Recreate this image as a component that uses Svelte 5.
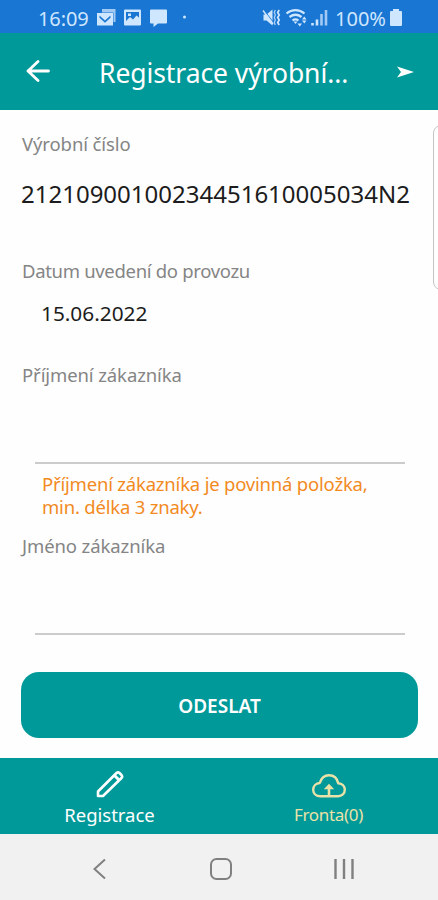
<script lang="ts">
	let serialNumber = '21210900100234451610005034N2';
	let commissioningDate = '15.06.2022';
	let surname = '';
	let firstName = '';
	let queueCount = 0;
</script>

<div class="screen">
	<div class="status-bar">
		<span class="clock">16:09</span>
		<svg class="notifications" width="92" height="24" viewBox="0 0 92 24" fill="currentColor">
			<path d="M5 4h13.500v13h-2V7.500H5z" opacity="0.75" />
			<path fill-rule="evenodd" d="M0 8h16v12.500H0zM2.500 10.500L8 15.500l5.500-5v2.200L8 17.700l-5.500-5z" />
			<path fill-rule="evenodd" d="M28 4.500h15a1 1 0 0 1 1 1v14a1 1 0 0 1-1 1H28a1 1 0 0 1-1-1v-14a1 1 0 0 1 1-1zM29 7v9l4-4 3 2.500 3.500-4 2.500 2V7zM31 8.500h3V11h-3z" />
			<path d="M54 4.500h15a1 1 0 0 1 1 1v12a1 1 0 0 1-1 1H61L56.500 22v-3.500H54a1 1 0 0 1-1-1v-12a1 1 0 0 1 1-1z" />
			<circle cx="87.500" cy="12" r="1.500" />
		</svg>
		<svg class="signals" width="66" height="24" viewBox="0 0 66 24" fill="none" stroke="currentColor">
			<path d="M1.500 9.500h3l6-5v16l-6-5h-3z" fill="currentColor" stroke="none" />
			<path d="M1.500 4.500l10 13" stroke="#1976d3" stroke-width="1" />
			<path d="M1 5.500l10 13.500" stroke-width="1.400" />
			<path d="M13.300 5l-1 2.500 1 2.500-1 2.500 1 2.500-1 2.500 1 2.500" stroke-width="1.300" opacity="0.8" />
			<path d="M17.200 5l-1.500 2.500 1.500 2.500-1.500 2.500 1.500 2.500-1.500 2.500 1.500 2.500" stroke-width="1.700" />
			<path d="M24.500 8.500c5.500-4.500 12.500-4.500 18 0M27.500 12c4-3 8-3 12 0M30.500 15.500c2-1.600 4-1.600 6 0" stroke-width="2.200" />
			<path d="M31.500 16.500h4l-2 2.500zM35.500 18.500h4.500l-2.200 3zM40 14.500h4.500l-2.200-3zM40 15.500h4.500l-2.200 3z" fill="currentColor" stroke="none" />
			<path d="M50.500 18v2.500M55 14.500v6" stroke-width="2.600" />
			<path d="M59.500 9v11.500M64 5v15.500" stroke-width="2.600" opacity="0.75" />
		</svg>
		<span class="percent">100%</span>
		<svg class="battery" width="12" height="18" viewBox="0 0 12 18" fill="currentColor">
			<path d="M3 0h6v2h2a1 1 0 0 1 1 1v13a1 1 0 0 1-1 1H1a1 1 0 0 1-1-1V3a1 1 0 0 1 1-1h2z" />
		</svg>
	</div>

	<header class="app-bar">
		<button class="icon-button" aria-label="Zpět">
			<svg width="24" height="24" viewBox="0 0 24 24" fill="none" stroke="currentColor" stroke-width="2.800" stroke-linecap="round" stroke-linejoin="round">
				<path d="M22.500 11H2M12 1.500L2 11l10 9.500" />
			</svg>
		</button>
		<h1>Registrace výrobní...</h1>
		<button class="icon-button" aria-label="Odeslat">
			<svg width="17" height="12" viewBox="0 0 17 12" fill="currentColor">
				<path d="M0 .5L17 6 0 11.500 4 6z" />
			</svg>
		</button>
	</header>

	<main>
		<div class="form">
			<div class="label">Výrobní číslo</div>
			<div class="serial">{serialNumber}</div>
			<div class="label tight">Datum uvedení do provozu</div>
			<div class="date">{commissioningDate}</div>
			<label class="label" for="surname">Příjmení zákazníka</label>
			<input id="surname" type="text" bind:value={surname} />
			<p class="error">Příjmení zákazníka je povinná položka,<br />min. délka 3 znaky.</p>
			<label class="label" for="firstname">Jméno zákazníka</label>
			<input id="firstname" type="text" bind:value={firstName} />
			<button class="submit">ODESLAT</button>
		</div>
		<div class="side-panel"></div>
	</main>

	<nav class="tabs">
		<a class="tab active" href="#registrace">
			<svg width="28" height="28" viewBox="0 0 28 28" fill="none" stroke="currentColor" stroke-width="2.600" stroke-linejoin="round">
				<path d="M2 26v-4.500L20.500 3q1.500-1.300 3 0l2 2q1.300 1.500 0 3L7 26z" />
				<path d="M18.500 5.500l4.500 4.500" stroke-width="3" />
			</svg>
			<span>Registrace</span>
		</a>
		<a class="tab" href="#fronta">
			<svg width="34" height="24" viewBox="0 0 34 24" fill="none" stroke="currentColor" stroke-width="2.400" stroke-linejoin="round">
				<path d="M8.500 22.300C4 22.300 1.200 19.400 1.200 15.800c0-3.700 2.800-6.600 6.600-6.800C9.200 4.200 12.800 1.200 17 1.200c4.800 0 8.200 3.200 9.200 8 3.800.2 6.600 2.900 6.600 6.600 0 3.800-2.900 6.500-6.600 6.500z" />
				<path d="M17 22V13" stroke-width="2.600" />
				<path d="M11.800 15.200L17 9.800l5.200 5.400z" fill="currentColor" stroke="none" />
			</svg>
			<span>Fronta({queueCount})</span>
		</a>
	</nav>

	<div class="system-nav">
		<svg width="14" height="22" viewBox="0 0 14 22" fill="none" stroke="currentColor" stroke-width="2">
			<path d="M12 1.500L1.500 11 12 20.500" />
		</svg>
		<svg width="22" height="22" viewBox="0 0 22 22" fill="none" stroke="currentColor" stroke-width="2">
			<rect x="1" y="1" width="20" height="20" rx="5.500" />
		</svg>
		<svg width="20" height="22" viewBox="0 0 20 22" fill="none" stroke="currentColor" stroke-width="2.400">
			<path d="M1.500 1v20M10 1v20M18.500 1v20" />
		</svg>
	</div>
</div>

<style>
	:global(body) {
		background: #fefefe;
	}

	.screen {
		display: flex;
		flex-direction: column;
		width: 438px;
		height: 900px;
		overflow: hidden;
		font-family: 'Noto Sans', sans-serif;
		background: #fefefe;
	}

	svg {
		display: block;
		flex: none;
	}

	button {
		font: inherit;
		border: none;
		background: none;
		color: inherit;
		padding: 0;
	}

	/* Status bar */
	.status-bar {
		display: flex;
		align-items: flex-start;
		height: 33px;
		padding: 5px 36px 0 38px;
		box-sizing: border-box;
		background: #1976d3;
		color: #cfe6ff;
		font-size: 20px;
		line-height: 27px;
		white-space: nowrap;
	}

	.clock {
		width: 59px;
		letter-spacing: -0.1px;
	}

	.signals {
		margin-left: 73px;
	}

	.percent {
		width: 55px;
		margin-left: 7px;
	}

	.battery {
		margin-top: 4px;
	}

	/* App bar */
	.app-bar {
		display: flex;
		align-items: center;
		height: 77px;
		padding: 0 24px 0 26px;
		box-sizing: border-box;
		background: #009999;
		color: #ffffff;
	}

	h1 {
		flex: 1;
		margin: 2px 0 0 49px;
		font-size: 26.5px;
		font-weight: 400;
		line-height: 36px;
		letter-spacing: -0.08px;
		white-space: nowrap;
	}

	/* Form */
	main {
		display: flex;
		height: 648px;
	}

	.form {
		display: flex;
		flex-direction: column;
		flex: none;
		width: 397px;
		padding: 22px 0 0 21px;
	}

	.label {
		color: #858585;
		font-size: 18.5px;
		line-height: 24px;
		letter-spacing: -0.1px;
		padding-left: 1px;
		white-space: nowrap;
	}

	.label.tight {
		letter-spacing: -0.32px;
	}

	.serial {
		margin: 22px 0 49px;
		color: #1c1c1c;
		font-size: 24px;
		line-height: 32px;
		white-space: nowrap;
	}

	.date {
		margin: 16px 0 36px 20px;
		color: #1c1c1c;
		font-size: 20.8px;
		line-height: 28px;
	}

	input {
		height: 77px;
		margin: 0 13px 0 14px;
		padding: 30px 6px 6px;
		box-sizing: border-box;
		border: none;
		border-bottom: 2px solid #cccccc;
		outline: none;
		background: transparent;
		font: inherit;
		font-size: 20.5px;
	}

	.error {
		margin: 8px 0 16px 21px;
		color: #f28a1e;
		font-size: 18.5px;
		line-height: 23px;
		letter-spacing: -0.2px;
		white-space: nowrap;
	}

	.submit {
		flex: none;
		height: 66px;
		margin-top: 37px;
		padding-top: 2px;
		border-radius: 18px;
		background: #009999;
		color: #ffffff;
		font-size: 19px;
		font-weight: 600;
	}

	.side-panel {
		flex: none;
		width: 20px;
		height: 163px;
		margin: 15px 0 0 15px;
		border: 1px solid #c4c4c4;
		border-radius: 8px;
	}

	/* Bottom tabs */
	.tabs {
		display: flex;
		height: 76px;
		background: #009999;
	}

	.tab {
		display: flex;
		flex: 1;
		flex-direction: column;
		align-items: center;
		justify-content: flex-end;
		padding-bottom: 7px;
		color: #e9e2a8;
		font-size: 17px;
		line-height: 24px;
		letter-spacing: -0.3px;
		text-decoration: none;
	}

	.tab svg {
		margin-bottom: 5px;
	}

	.tab.active {
		color: #ffffff;
		font-size: 18.5px;
		letter-spacing: 0;
	}

	/* System navigation */
	.system-nav {
		display: flex;
		align-items: center;
		justify-content: space-between;
		height: 66px;
		padding: 3px 84px 0 93px;
		box-sizing: border-box;
		background: #f1f1f1;
		color: #808080;
	}
</style>
